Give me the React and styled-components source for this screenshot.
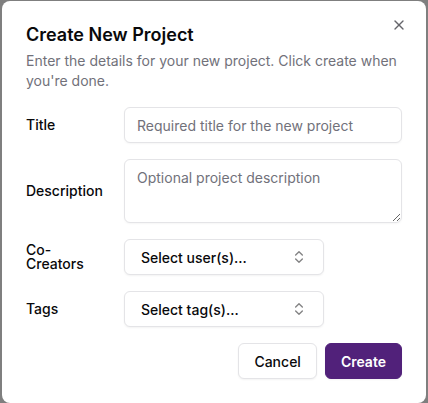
import React, { useState } from "react";
import styled, { createGlobalStyle } from "styled-components";
import { X, ChevronsUpDown } from "lucide-react";

const GlobalStyle = createGlobalStyle`
  * { box-sizing: border-box; }
  body {
    margin: 0;
    background-color: #7f7f7f;
    font-family: "Inter", "Noto Sans", sans-serif;
    color: #09090b;
  }
`;

const Overlay = styled.div`
  padding: 1px 2px;
`;

const Dialog = styled.div`
  position: relative;
  display: grid;
  gap: 16px;
  padding: 24px;
  background-color: #ffffff;
  border-radius: 8px;
`;

const CloseButton = styled.button`
  position: absolute;
  top: 16px;
  right: 19px;
  display: flex;
  padding: 0;
  border: none;
  background: none;
  color: #3f3f46;
  opacity: 0.8;
  cursor: pointer;
`;

const Header = styled.div`
  display: flex;
  flex-direction: column;
  gap: 6px;
`;

const Title = styled.h2`
  margin: 0;
  font-size: 18px;
  line-height: 20px;
  font-weight: 600;
`;

const Description = styled.p`
  margin: 0;
  font-size: 14px;
  line-height: 20px;
  color: #71717a;
`;

const Form = styled.div`
  display: grid;
  gap: 16px;
`;

const Row = styled.div`
  display: grid;
  grid-template-columns: repeat(4, minmax(0, 1fr));
  align-items: center;
  gap: 16px;
`;

const Label = styled.label`
  font-size: 14px;
  font-weight: 500;
  line-height: 1;
`;

const Input = styled.input`
  grid-column: span 3;
  height: 36px;
  padding: 4px 12px;
  border: 1px solid #e4e4e7;
  border-radius: 6px;
  font-family: inherit;
  font-size: 14px;
  color: #09090b;
  box-shadow: 0 1px 2px rgba(0, 0, 0, 0.04);
  outline: none;
  &::placeholder { color: #71717a; }
`;

const TextArea = styled.textarea`
  grid-column: span 3;
  height: 64px;
  padding: 8px 12px;
  border: 1px solid #e4e4e7;
  border-radius: 6px;
  font-family: inherit;
  font-size: 14px;
  line-height: 20px;
  color: #09090b;
  box-shadow: 0 1px 2px rgba(0, 0, 0, 0.04);
  outline: none;
  &::placeholder { color: #71717a; }
`;

const SelectButton = styled.button`
  grid-column: span 3;
  width: 200px;
  height: 36px;
  display: flex;
  align-items: center;
  justify-content: space-between;
  padding: 0 16px;
  border: 1px solid #e4e4e7;
  border-radius: 6px;
  background-color: #ffffff;
  box-shadow: 0 1px 2px rgba(0, 0, 0, 0.05);
  font-family: inherit;
  font-size: 14px;
  font-weight: 500;
  color: #09090b;
  cursor: pointer;
  svg { opacity: 0.5; flex-shrink: 0; }
`;

const Footer = styled.div`
  display: flex;
  justify-content: flex-end;
  gap: 8px;
`;

const Button = styled.button`
  height: 36px;
  padding: 0 15px;
  border-radius: 6px;
  font-family: inherit;
  font-size: 14px;
  font-weight: ${(props) => (props.primary ? 600 : 500)};
  border: 1px solid ${(props) => (props.primary ? "#51217a" : "#e4e4e7")};
  background-color: ${(props) => (props.primary ? "#51217a" : "#ffffff")};
  color: ${(props) => (props.primary ? "#ffffff" : "#09090b")};
  box-shadow: 0 1px 2px rgba(0, 0, 0, 0.05);
  cursor: pointer;
`;

const App = () => {
  const [title, setTitle] = useState("");
  const [desc, setDesc] = useState("");

  return (
    <>
      <GlobalStyle />
      <Overlay>
        <Dialog>
          <CloseButton aria-label="Close">
            <X size={16} strokeWidth={2} />
          </CloseButton>
          <Header>
            <Title>Create New Project</Title>
            <Description>
              Enter the details for your new project. Click create when you're done.
            </Description>
          </Header>
          <Form>
            <Row>
              <Label>Title</Label>
              <Input
                value={title}
                onChange={(e) => setTitle(e.target.value)}
                placeholder="Required title for the new project"
              />
            </Row>
            <Row>
              <Label>Description</Label>
              <TextArea
                value={desc}
                onChange={(e) => setDesc(e.target.value)}
                placeholder="Optional project description"
              />
            </Row>
            <Row>
              <Label>Co-Creators</Label>
              <SelectButton>
                Select user(s)...
                <ChevronsUpDown size={16} />
              </SelectButton>
            </Row>
            <Row>
              <Label>Tags</Label>
              <SelectButton>
                Select tag(s)...
                <ChevronsUpDown size={16} />
              </SelectButton>
            </Row>
          </Form>
          <Footer>
            <Button>Cancel</Button>
            <Button primary>Create</Button>
          </Footer>
        </Dialog>
      </Overlay>
    </>
  );
};

export default App;
